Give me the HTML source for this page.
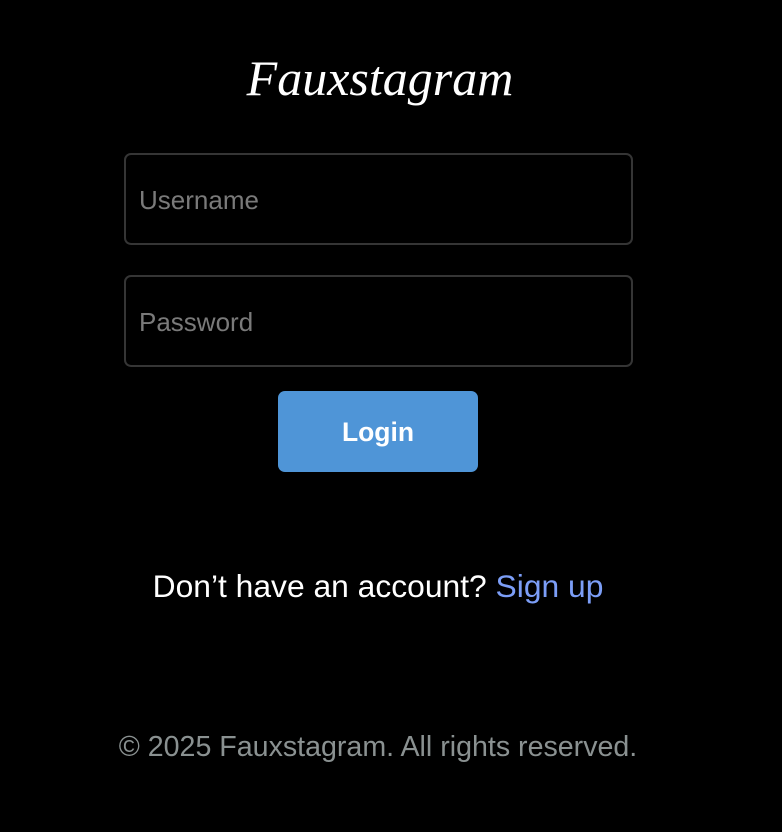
<!DOCTYPE html>
<html><head><meta charset="utf-8"><style>
html,body{margin:0;background:#000;width:782px;height:832px;overflow:hidden;font-family:"Liberation Sans",sans-serif}
.c{position:absolute;left:0;width:756px;text-align:center}
.logo{top:46px;color:#fff;font-family:"Liberation Serif",serif;font-style:italic;font-size:50px;line-height:64px;left:2px}
.in{position:absolute;left:124px;height:92px;border:2px solid #353535;border-radius:7px;box-sizing:border-box;width:509px}
.in span{position:absolute;left:13px;top:2px;line-height:86px;font-size:26px;color:#7a7a7a}
.btn{position:absolute;left:278px;top:391px;width:200px;height:81px;background:#4f95d7;border-radius:7px;color:#fff;font-weight:bold;font-size:26.5px;text-align:center;line-height:82px}
.su{top:566px;color:#fff;font-size:31.8px;line-height:40px}
.su a{color:#7c9ef7}
.ft{top:729px;color:#8a9191;font-size:28.6px;line-height:36px}
</style></head><body>
<div class="c logo">Fauxstagram</div>
<div class="in" style="top:153px"><span>Username</span></div>
<div class="in" style="top:275px"><span>Password</span></div>
<div class="btn">Login</div>
<div class="c su">Don’t have an account? <a>Sign up</a></div>
<div class="c ft">© 2025 Fauxstagram. All rights reserved.</div>
</body></html>
